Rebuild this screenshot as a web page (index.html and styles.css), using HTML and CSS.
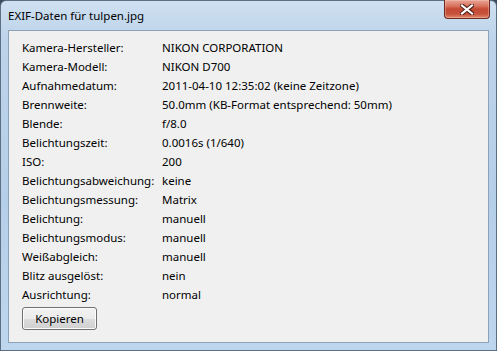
FILE: index.html
```html
<!DOCTYPE html>
<html lang="de">
<head>
  <meta charset="UTF-8" />
  <title>EXIF-Daten für tulpen.jpg</title>
  <link rel="stylesheet" href="styles.css">
</head>
<body>

<div class="window">
  <div class="titlebar">
    <span class="title">EXIF-Daten für tulpen.jpg</span>
    <button class="close" title="Schließen">
      <svg width="14" height="11" viewBox="0 0 14 11">
        <path d="M2 1.5 L12 9.5 M12 1.5 L2 9.5" stroke="#4a1a14" stroke-width="4.2" stroke-linecap="square" fill="none" />
        <path d="M2 1.5 L12 9.5 M12 1.5 L2 9.5" stroke="#fff" stroke-width="2.2" stroke-linecap="square" fill="none" />
      </svg>
    </button>
  </div>

  <div class="client">
    <div class="exif">
      <span class="label">Kamera-Hersteller:</span><span class="value">NIKON CORPORATION</span>
      <span class="label">Kamera-Modell:</span><span class="value">NIKON D700</span>
      <span class="label">Aufnahmedatum:</span><span class="value">2011-04-10 12:35:02 (keine Zeitzone)</span>
      <span class="label">Brennweite:</span><span class="value">50.0mm (KB-Format entsprechend: 50mm)</span>
      <span class="label">Blende:</span><span class="value">f/8.0</span>
      <span class="label">Belichtungszeit:</span><span class="value">0.0016s (1/640)</span>
      <span class="label">ISO:</span><span class="value">200</span>
      <span class="label">Belichtungsabweichung:</span><span class="value">keine</span>
      <span class="label">Belichtungsmessung:</span><span class="value">Matrix</span>
      <span class="label">Belichtung:</span><span class="value">manuell</span>
      <span class="label">Belichtungsmodus:</span><span class="value">manuell</span>
      <span class="label">Weißabgleich:</span><span class="value">manuell</span>
      <span class="label">Blitz ausgelöst:</span><span class="value">nein</span>
      <span class="label">Ausrichtung:</span><span class="value">normal</span>
    </div>
    <button class="copy">Kopieren</button>
  </div>
</div>

</body>
</html>
```

FILE: styles.css
```css
body {
  margin: 0;
  padding: 0;
  background: #3a4a5a;
  font-family: "Noto Sans", "Open Sans", sans-serif;
  font-size: 11.5px;
  color: #000;
  overflow: hidden;
}

.window {
  width: 497px;
  height: 351px;
  box-sizing: border-box;
  border: 1px solid #5d6f82;
  border-radius: 6px 6px 0 0;
  background: linear-gradient(to bottom, #cfe0f1 0px, #bcd3ea 40px, #b6cfe8 200px, #bed6ee 351px);
  padding: 0 7px 7px 7px;
  display: flex;
  flex-direction: column;
}

.titlebar {
  height: 29px;
  display: flex;
  align-items: flex-start;
  justify-content: space-between;
}

.title {
  margin-top: 7px;
  color: #000;
  font-size: 11.5px;
  line-height: 16px;
}

.close {
  width: 46px;
  height: 19px;
  margin: -1px -1px 0 0;
  padding: 0;
  border: 1px solid #6b2b22;
  border-top: none;
  border-radius: 0 0 4px 4px;
  background: linear-gradient(to bottom, #e8a496 0px, #d9745f 6px, #c44a34 9px, #c7523c 14px, #e08a6e 18px);
  box-shadow: inset 0 0 0 1px rgba(255, 210, 200, 0.35);
  display: flex;
  align-items: center;
  justify-content: center;
}

.client {
  flex: 1;
  background: #f0f0f0;
  border: 1px solid #8da2b8;
  padding: 7px 13px 0 13px;
}

.exif {
  display: grid;
  grid-template-columns: 140px auto;
  grid-auto-rows: 19px;
  line-height: 19px;
}

.copy {
  margin-top: 3px;
  width: 75px;
  height: 23px;
  padding: 0;
  font-family: inherit;
  font-size: 11.5px;
  color: #000;
  border: 1px solid #707070;
  border-radius: 3px;
  background: linear-gradient(to bottom, #f2f2f2 0%, #ebebeb 50%, #dddddd 51%, #cfcfcf 100%);
  box-shadow: inset 0 0 0 1px #fcfcfc;
}
```
